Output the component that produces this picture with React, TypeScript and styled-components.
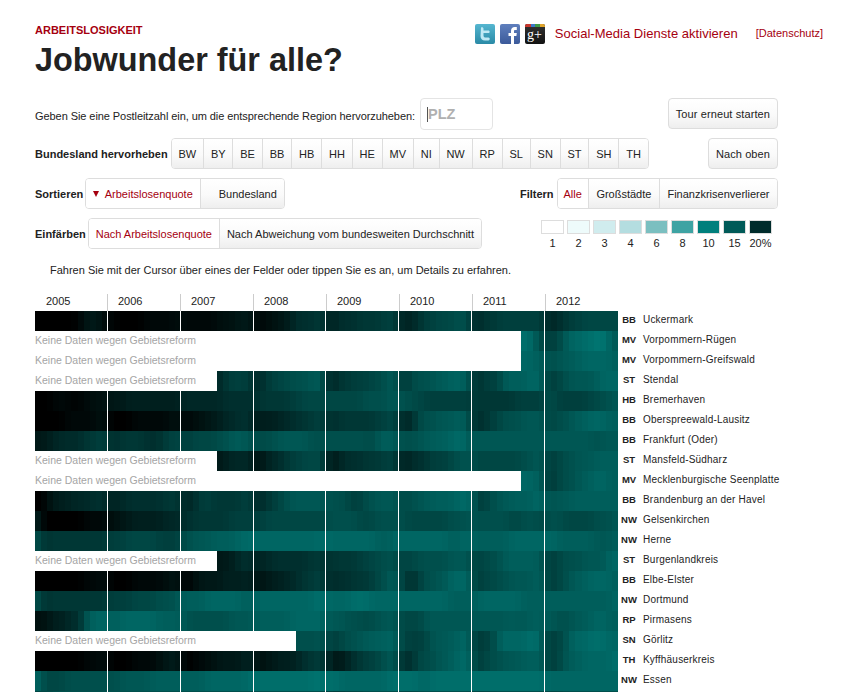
import React from "react";
import styled, { createGlobalStyle } from "styled-components";

const GlobalStyle = createGlobalStyle`
  html, body {
    margin: 0;
    padding: 0;
    height: 692px;
    overflow: hidden;
    background: #fff;
    font-family: "Liberation Sans", Arial, sans-serif;
    color: #222;
  }
`;

const Page = styled.div`
  padding: 24px 0 0 35px;
`;

const Header = styled.header`
  width: 788px;
  height: 74px;
  display: flex;
  justify-content: space-between;
  align-items: flex-start;
`;

const Kicker = styled.div`
  font-size: 11px;
  line-height: 13px;
  font-weight: bold;
  color: #a5000f;
`;

const Title = styled.h1`
  margin: 5px 0 0;
  font-size: 32.4px;
  line-height: 36px;
  font-weight: bold;
  color: #222;
`;

const Social = styled.div`
  display: flex;
  align-items: center;
  height: 20px;
`;

const SocialTile = styled.span<{ $bg: string }>`
  width: 20px;
  height: 20px;
  margin-right: 5px;
  border-radius: 2px;
  background: ${(p) => p.$bg};
  display: flex;
  align-items: center;
  justify-content: center;
  overflow: hidden;
  color: #fff;
`;

const ActivateLink = styled.a`
  margin: 0 0 2px 5px;
  font-size: 13px;
  letter-spacing: 0.03px;
  color: #a5000f;
`;

const PrivacyLink = styled.a`
  margin: 0 0 2px 18px;
  font-size: 11px;
  color: #a5000f;
`;

const Controls = styled.div`
  width: 743px;
  display: flex;
  flex-direction: column;
  gap: 9px;
`;

const ControlRow = styled.div`
  display: flex;
  align-items: center;
  justify-content: space-between;
  height: 31px;
`;

const ControlGroup = styled.div<{ $gap?: number }>`
  display: flex;
  align-items: center;
  gap: ${(p) => p.$gap ?? 3}px;
`;

const PlainLabel = styled.span`
  margin-top: 4px;
  font-size: 11px;
  letter-spacing: -0.07px;
  color: #222;
`;

const BoldLabel = styled.span`
  font-size: 11px;
  font-weight: bold;
  color: #222;
`;

const ZipField = styled.div`
  position: relative;
  width: 73px;
  height: 32px;
  margin: 0 0 -1px 2px;
`;

const ZipInput = styled.input`
  box-sizing: border-box;
  width: 100%;
  height: 100%;
  padding: 0 7px;
  border: 1px solid #e4e4e4;
  border-radius: 4px;
  outline: none;
  font-family: inherit;
  font-size: 14.5px;
  font-weight: bold;
  &::placeholder {
    color: #b0b0b0;
    opacity: 1;
  }
`;

const Caret = styled.span`
  position: absolute;
  left: 7px;
  top: 9px;
  width: 1px;
  height: 15px;
  background: #555;
`;

const Segments = styled.div`
  display: flex;
  height: 31px;
  box-sizing: border-box;
  border: 1px solid #ddd;
  border-radius: 4px;
  overflow: hidden;
`;

const Segment = styled.button<{ $active?: boolean; $width?: number; $pad?: number }>`
  box-sizing: border-box;
  flex: none;
  width: ${(p) => (p.$width ? `${p.$width}px` : "auto")};
  padding: 0 ${(p) => p.$pad ?? 7.5}px;
  border: 0;
  border-left: 1px solid #ddd;
  background: ${(p) => (p.$active ? "#fff" : "linear-gradient(#fff, #fafafa 55%, #eee)")};
  color: ${(p) => (p.$active ? "#a5000f" : "#222")};
  font-family: inherit;
  font-size: 11px;
  display: flex;
  align-items: center;
  justify-content: flex-end;
  gap: 6px;
  &:first-child {
    border-left: 0;
  }
`;

const SoloButton = styled.button`
  box-sizing: border-box;
  height: 31px;
  padding: 0 7px;
  border: 1px solid #ddd;
  border-radius: 4px;
  background: linear-gradient(#fff, #fafafa 55%, #eee);
  color: #222;
  font-family: inherit;
  font-size: 11px;
  letter-spacing: 0.1px;
`;

const SortArrow = styled.span`
  width: 0;
  height: 0;
  border-left: 3px solid transparent;
  border-right: 3px solid transparent;
  border-top: 6px solid #a5000f;
`;

const Legend = styled.div`
  align-self: flex-start;
  display: flex;
  gap: 3px;
  margin: 2px 6px 0 0;
`;

const LegendItem = styled.div`
  width: 23px;
  display: flex;
  flex-direction: column;
  align-items: center;
  gap: 3px;
  font-size: 11px;
  line-height: 12px;
  color: #222;
`;

const LegendSwatch = styled.span<{ $color: string }>`
  box-sizing: border-box;
  width: 23px;
  height: 14px;
  border: 1px solid #ddd;
  background: ${(p) => p.$color};
`;

const Hint = styled.p`
  margin: 15px 0 0;
  padding-left: 15px;
  font-size: 11px;
  line-height: 13px;
  color: #222;
`;

const YearHeader = styled.div`
  display: flex;
  height: 17px;
  margin-top: 17px;
`;

const Year = styled.div`
  box-sizing: border-box;
  width: 73px;
  padding-left: 10px;
  border-left: 1px solid #ccc;
  font-size: 11px;
  line-height: 15px;
  color: #222;
  &:first-child {
    width: 72px;
    padding-left: 11px;
    border-left: 0;
  }
`;

const Rows = styled.div`
  display: flex;
  flex-direction: column;
`;

const Row = styled.div`
  display: flex;
  height: 20px;
  align-items: center;
`;

const Strip = styled.div`
  flex: none;
  width: 583px;
  height: 20px;
  display: grid;
  grid-template-columns: repeat(96, 1fr);
`;

const NoData = styled.div<{ $months: number }>`
  grid-column: span ${(p) => p.$months};
  background: #fff;
  padding-top: 3px;
  box-sizing: border-box;
  font-size: 10.5px;
  line-height: 12px;
  white-space: nowrap;
  color: #a5a5a5;
`;

const Cell = styled.div<{ $yearEnd: boolean }>`
  box-sizing: border-box;
  border-right: ${(p) => (p.$yearEnd ? "1px solid #fff" : "0")};
`;

const StateCode = styled.span`
  flex: none;
  width: 22px;
  margin-bottom: 4px;
  text-align: center;
  font-size: 9.5px;
  font-weight: bold;
  color: #222;
`;

const RegionName = styled.span`
  margin: 0 0 4px 3px;
  font-size: 10px;
  letter-spacing: 0.2px;
  white-space: nowrap;
  color: #222;
`;

const STATES = ["BW", "BY", "BE", "BB", "HB", "HH", "HE", "MV", "NI", "NW", "RP", "SL", "SN", "ST", "SH", "TH"];
const YEARS = [2005, 2006, 2007, 2008, 2009, 2010, 2011, 2012];
const LEGEND = [
  ["1", "#ffffff"],
  ["2", "#eefbfb"],
  ["3", "#d0ecee"],
  ["4", "#b4dde0"],
  ["6", "#7bbfc0"],
  ["8", "#3ea3a3"],
  ["10", "#007f7c"],
  ["15", "#005a58"],
  ["20%", "#002b2b"],
];

// one hex digit per month, 0 = black, f = lightest teal
const REGIONS: { code: string; name: string; gap: number; data: string }[] = [
  { code: "BB", name: "Uckermark", gap: 0, data: "000000013331 100000111112 111111222333 112233566677 456667777888 455788999aa9 567788888888 556788999999" },
  { code: "MV", name: "Vorpommern-Rügen", gap: 80, data: "eeb9 889cddeeffdb" },
  { code: "MV", name: "Vorpommern-Greifswald", gap: 80, data: "ddcc aabbccdddddc" },
  { code: "ST", name: "Stendal", gap: 30, data: "578887 568899aaabbb 467788899abb 78aaabbccdcb 67889ccccddc 889abbbbcddd" },
  { code: "HB", name: "Bremerhaven", gap: 0, data: "000111011222 333444444444 555555566666 677777889999 999999aaaabb aa9988888888 777777788888 a98888899aab" },
  { code: "BB", name: "Oberspreewald-Lausitz", gap: 0, data: "000001111122 000011111122 112233455666 344455667788 667777778899 557aaabbbcca 66789aaabbbb 99aabccdddcc" },
  { code: "BB", name: "Frankfurt (Oder)", gap: 0, data: "334556567788 667777666889 889999aabcba a9aabbbbbaaa aaaaaaa9bccb aaabbcccddeb bbbbbbbbbbbb bbbbbbbbabbb" },
  { code: "ST", name: "Mansfeld-Südharz", gap: 30, data: "345555 235567889999 345666777888 456678889aab 99999999aabb 889aabbbcccc" },
  { code: "MV", name: "Mecklenburgische Seenplatte", gap: 80, data: "ddcc 789aabccddcc" },
  { code: "BB", name: "Brandenburg an der Havel", gap: 0, data: "003344555666 455666666777 556887777788 56789abbbbbb aaa988aabbbb 9aabbccccdde a79abbccccdd abbbcccccccc" },
  { code: "NW", name: "Gelsenkirchen", gap: 0, data: "400000001111 223344444555 667777778888 889999999999 aaaaa999aaaa a9999999aaab aaaaaa99aaa9 aaa99999aaab" },
  { code: "NW", name: "Herne", gap: 0, data: "a67777777777 888999998888 aabbbccccdde ddddddddddde ddddddddcccd ddddddddccdd ccccccdddddd ddccccccbbbc" },
  { code: "ST", name: "Burgenlandkreis", gap: 30, data: "334566 455666666777 677778899aaa 899aaaaabbbb 899aaccccccb 889aaabbbbdd" },
  { code: "BB", name: "Elbe-Elster", gap: 0, data: "000000001112 000011111223 012333344445 233445567788 566677789abc 8769aabbdddd 8899aabbbbcc 889abccddddc" },
  { code: "NW", name: "Dortmund", gap: 0, data: "a67777777777 88889999aaab ccccddddddcc ddddddddddee ddddeeeddddd ddddddddcccc cdddddddcccc cccccccccccd" },
  { code: "RP", name: "Pirmasens", gap: 0, data: "22344566ccdd ccddddddcccc baaaaaaabbbb ccccccdddddd bbbaaa9aabbb 9999bbbbbbbb bbbbbbcbbccc bbaabbccddcc" },
  { code: "SN", name: "Görlitz", gap: 43, data: "aaaab 889aabbcccdc 98889bbbccdd 7889dddddeec 889adddeeedd" },
  { code: "TH", name: "Kyffhäuserkreis", gap: 0, data: "000000001112 000011112334 001122333345 223344456778 433567889abb 667a9abbcdde 889aabbbcccc 889bccddddde" },
  { code: "NW", name: "Essen", gap: 0, data: "d9999aaaaaaa aabbbbbccccc ccccddddddde eeeeeeeeeefe eeddddddddee eeeddeeeeeee eeeeeeeeeeee dddddddddddd" },
  { code: "", name: "", gap: 0, data: "999aaaaaaaaa aaaaaaaaaaaa aaaaaaaaaaaa aaaaaaaaaaaa 888999aaaaaa 999aaaaaaaaa 999aaaaaaaaa 999aaaaaaaaa" },
];

// soften neighbouring months a little, the source data is less blocky than the digits
const shade = (digits: string[], i: number) => {
  const at = (n: number) => parseInt(digits[Math.max(0, Math.min(digits.length - 1, n))], 16);
  const v = (at(i - 1) + 2 * at(i) + at(i + 1)) / 60;
  return `rgb(0, ${Math.round(v * 118)}, ${Math.round(v * 114)})`;
};

const Region = ({ code, name, gap, data }: (typeof REGIONS)[number]) => {
  const months = data.replace(/ /g, "").split("");
  return (
    <Row>
      <Strip>
        {gap > 0 && <NoData $months={gap}>Keine Daten wegen Gebietsreform</NoData>}
        {months.map((_, i) => (
          <Cell
            key={i}
            $yearEnd={(gap + i + 1) % 12 === 0 && i < months.length - 1}
            style={{ backgroundColor: shade(months, i) }}
          />
        ))}
      </Strip>
      <StateCode>{code}</StateCode>
      <RegionName>{name}</RegionName>
    </Row>
  );
};

export default function App() {
  return (
    <Page>
      <GlobalStyle />
      <Header>
        <div>
          <Kicker>ARBEITSLOSIGKEIT</Kicker>
          <Title>Jobwunder für alle?</Title>
        </div>
        <Social>
          <SocialTile $bg="linear-gradient(#55b6d0, #2a8aa6)">
            <svg width="14" height="16" viewBox="0 0 14 16">
              <path d="M3 1.500c1.500-.8 2.500 0 2.500 1.300V4.500h5c1.300 0 1.800 2.500 0 2.500h-5v2.500c0 1.500 1 2 2 2h3c1.800 0 1.500 3 0 3H7c-3 0-4.500-1.800-4.500-4.500z" fill="#bfe9f4" />
            </svg>
          </SocialTile>
          <SocialTile $bg="linear-gradient(#5f7fbd, #3b5a9a)">
            <svg width="20" height="20" viewBox="0 0 20 20">
              <path d="M11 20v-8H8.500V9H11V7c0-2.500 1.500-4 3.800-4h2v3h-1.600c-.9 0-1.200.5-1.200 1.200V9h2.800l-.4 3H14v8z" fill="#fff" />
            </svg>
          </SocialTile>
          <SocialTile $bg="linear-gradient(#333, #111)">
            <svg width="20" height="20" viewBox="0 0 20 20">
              <rect width="6" height="3" fill="#c8372d" />
              <rect x="6" width="4" height="3" fill="#3b78c8" />
              <rect x="10" width="5" height="3" fill="#3f9a46" />
              <rect x="15" width="5" height="3" fill="#e0a52c" />
              <text x="2" y="15" fontFamily="Liberation Serif, serif" fontSize="14" fill="#fff">g+</text>
            </svg>
          </SocialTile>
          <ActivateLink>Social-Media Dienste aktivieren</ActivateLink>
          <PrivacyLink>[Datenschutz]</PrivacyLink>
        </Social>
      </Header>

      <Controls>
        <ControlRow>
          <ControlGroup>
            <PlainLabel>Geben Sie eine Postleitzahl ein, um die entsprechende Region hervorzuheben:</PlainLabel>
            <ZipField>
              <ZipInput placeholder="PLZ" />
              <Caret />
            </ZipField>
          </ControlGroup>
          <SoloButton>Tour erneut starten</SoloButton>
        </ControlRow>

        <ControlRow>
          <ControlGroup>
            <BoldLabel>Bundesland hervorheben</BoldLabel>
            <Segments>
              {STATES.map((s) => (
                <Segment key={s} $pad={6.85}>{s}</Segment>
              ))}
            </Segments>
          </ControlGroup>
          <SoloButton>Nach oben</SoloButton>
        </ControlRow>

        <ControlRow>
          <ControlGroup $gap={2}>
            <BoldLabel>Sortieren</BoldLabel>
            <Segments>
              <Segment $active $width={114}>
                <SortArrow />
                Arbeitslosenquote
              </Segment>
              <Segment $width={84}>Bundesland</Segment>
            </Segments>
          </ControlGroup>
          <ControlGroup>
            <BoldLabel>Filtern</BoldLabel>
            <Segments>
              <Segment $active $pad={6}>Alle</Segment>
              <Segment>Großstädte</Segment>
              <Segment>Finanzkrisenverlierer</Segment>
            </Segments>
          </ControlGroup>
        </ControlRow>

        <ControlRow>
          <ControlGroup $gap={2}>
            <BoldLabel>Einfärben</BoldLabel>
            <Segments>
              <Segment $active $pad={7}>Nach Arbeitslosenquote</Segment>
              <Segment $pad={7}>Nach Abweichung vom bundesweiten Durchschnitt</Segment>
            </Segments>
          </ControlGroup>
          <Legend>
            {LEGEND.map(([label, color]) => (
              <LegendItem key={label}>
                <LegendSwatch $color={color} />
                {label}
              </LegendItem>
            ))}
          </Legend>
        </ControlRow>
      </Controls>

      <Hint>Fahren Sie mit der Cursor über eines der Felder oder tippen Sie es an, um Details zu erfahren.</Hint>

      <YearHeader>
        {YEARS.map((y) => (
          <Year key={y}>{y}</Year>
        ))}
      </YearHeader>

      <Rows>
        {REGIONS.map((r) => (
          <Region key={r.name} {...r} />
        ))}
      </Rows>
    </Page>
  );
}
